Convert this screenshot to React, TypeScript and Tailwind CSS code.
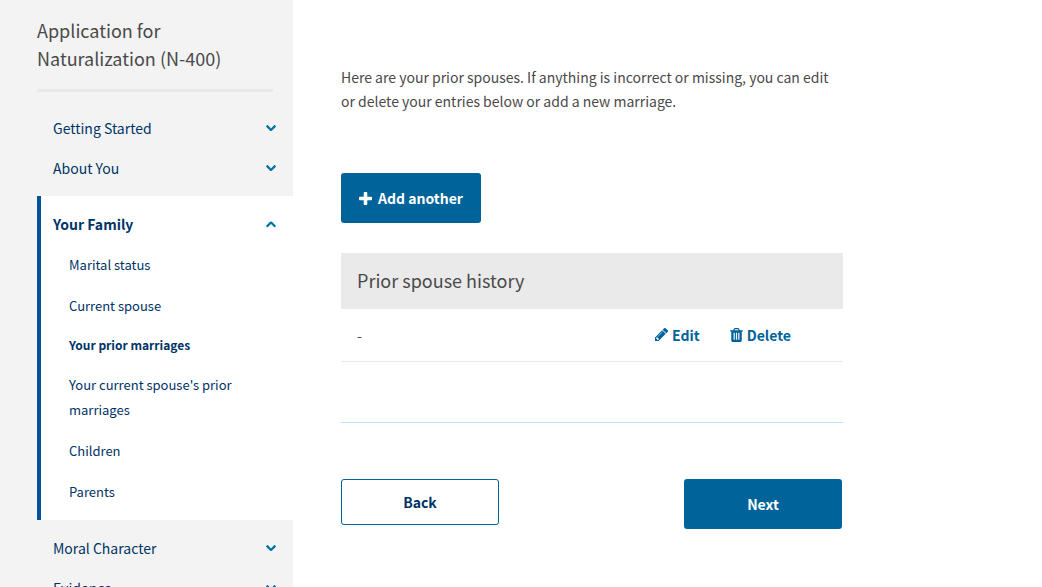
import { useState } from 'react';
import clsx from 'clsx';

interface ISection {
  title: string;
  pages?: string[];
}

const sections: ISection[] = [
  { title: 'Getting Started' },
  { title: 'About You' },
  {
    title: 'Your Family',
    pages: [
      'Marital status',
      'Current spouse',
      'Your prior marriages',
      "Your current spouse's prior marriages",
      'Children',
      'Parents',
    ],
  },
  { title: 'Moral Character' },
  { title: 'Evidence' },
];

const currentPage = 'Your prior marriages';

const ChevronIcon = ({ up }: { up: boolean }) => (
  <svg
    viewBox="90 533 1612 1035"
    fill="currentColor"
    aria-hidden="true"
    className={clsx('w-2.5 text-[#0071a6]', up && 'rotate-180')}
  >
    <path d="M1683 808l-742 741q-19 19-45 19t-45-19l-742-741q-19-19-19-45.500t19-45.500l166-165q19-19 45-19t45 19l531 531 531-531q19-19 45-19t45 19l166 165q19 19 19 45.500t-19 45.500z" />
  </svg>
);

const PlusIcon = () => (
  <svg viewBox="0 128 1408 1408" fill="currentColor" aria-hidden="true" className="size-[13px]">
    <path d="M1408 736v192q0 40-28 68t-68 28H896v416q0 40-28 68t-68 28H608q-40 0-68-28t-28-68v-416H96q-40 0-68-28T0 928V736q0-40 28-68t68-28h416V224q0-40 28-68t68-28h192q40 0 68 28t28 68v416h416q40 0 68 28t28 68z" />
  </svg>
);

const PencilIcon = () => (
  <svg viewBox="0 21 1515 1515" fill="currentColor" aria-hidden="true" className="size-[13px]">
    <path d="M363 1408l91-91-235-235-91 91v107h128v128h107zm523-928q0-22-22-22-10 0-17 7l-542 542q-7 7-7 17 0 22 22 22 10 0 17-7l542-542q7-7 7-17zm-54-192l416 416-832 832H0v-416zm683 96q0 53-37 90l-166 166-416-416 166-165q36-38 90-38 53 0 91 38l235 234q37 39 37 91z" />
  </svg>
);

const TrashIcon = () => (
  <svg viewBox="0 0 1408 1536" fill="currentColor" aria-hidden="true" className="h-3.5 w-[13px]">
    <path d="M512 1248V544q0-14-9-23t-23-9h-64q-14 0-23 9t-9 23v704q0 14 9 23t23 9h64q14 0 23-9t9-23zm256 0V544q0-14-9-23t-23-9h-64q-14 0-23 9t-9 23v704q0 14 9 23t23 9h64q14 0 23-9t9-23zm256 0V544q0-14-9-23t-23-9h-64q-14 0-23 9t-9 23v704q0 14 9 23t23 9h64q14 0 23-9t9-23zM480 256h448l-48-117q-7-9-17-11H546q-10 2-17 11zm928 32v64q0 14-9 23t-23 9h-96v948q0 83-47 143.500t-113 60.500H288q-66 0-113-58.500t-47-141.500V384H32q-14 0-23-9t-9-23v-64q0-14 9-23t23-9h309l70-167q15-37 54-63t79-26h320q40 0 79 26t54 63l70 167h309q14 0 23 9t9 23z" />
  </svg>
);

interface INavSection {
  section: ISection;
  isOpen: boolean;
  onToggle: () => void;
}

const NavSection = ({ section, isOpen, onToggle }: INavSection) => (
  <li className={clsx('border-l-4', isOpen ? 'my-2 border-[#00529b] bg-white py-2' : 'border-transparent')}>
    <button
      type="button"
      onClick={onToggle}
      aria-expanded={isOpen}
      className={clsx(
        'flex h-10 w-full cursor-pointer items-center justify-between pl-3 pr-[17px] text-left',
        isOpen && 'font-bold'
      )}
    >
      {section.title}
      <ChevronIcon up={isOpen} />
    </button>
    {isOpen && section.pages && (
      <ul className="pl-7 pr-12">
        {section.pages.map((page) => (
          <li key={page} className="py-2">
            <a
              href="#"
              className={clsx(
                'block',
                page === currentPage ? 'text-[12px] font-bold leading-[22px]' : 'text-[13px] leading-[25px]'
              )}
            >
              {page}
            </a>
          </li>
        ))}
      </ul>
    )}
  </li>
);

const Sidebar = () => {
  const [openSection, setOpenSection] = useState('Your Family');

  return (
    <aside className="w-[293px] shrink-0 bg-[#f3f3f3] pl-[37px]">
      <h1 className="mr-5 border-b-3 border-[#e9e9e9] pb-[17px] pt-4 text-[18px] leading-7 text-[#4a4a4a]">
        Application for Naturalization (N-400)
      </h1>
      <nav className="mt-4 text-[#003366]">
        <ul>
          {sections.map((section) => (
            <NavSection
              key={section.title}
              section={section}
              isOpen={openSection === section.title}
              onToggle={() => setOpenSection(openSection === section.title ? '' : section.title)}
            />
          ))}
        </ul>
      </nav>
    </aside>
  );
};

export default function App() {
  return (
    <div className="flex min-h-screen bg-white font-['Noto_Sans_CJK_SC',sans-serif] text-[14px] leading-6">
      <Sidebar />
      <main className="min-w-0 flex-1 px-12 pt-[65px]">
        <div className="max-w-[502px]">
          <p className="text-[#4a4a4a]">
            Here are your prior spouses. If anything is incorrect or missing, you can edit or delete your entries
            below or add a new marriage.
          </p>
          <button
            type="button"
            className="mt-15 flex h-[50px] cursor-pointer items-center gap-1.5 rounded-[3px] bg-[#00639a] px-[18px] font-bold text-white"
          >
            <PlusIcon />
            Add another
          </button>
          <table className="mt-[30px] w-full text-left text-[#4a4a4a]">
            <thead>
              <tr className="h-14 bg-[#eaeaea]">
                <th colSpan={2} scope="col" className="px-4 pb-0.5 text-[18px] font-normal">
                  Prior spouse history
                </th>
              </tr>
            </thead>
            <tbody>
              <tr className="h-[52px] border-b border-[#e9e9e9]">
                <td className="px-4">-</td>
                <td className="pr-13">
                  <div className="flex justify-end gap-[30px] font-bold text-[#00639a]">
                    <button type="button" className="flex cursor-pointer items-center gap-1">
                      <PencilIcon />
                      Edit
                    </button>
                    <button type="button" className="flex cursor-pointer items-center gap-1">
                      <TrashIcon />
                      Delete
                    </button>
                  </div>
                </td>
              </tr>
            </tbody>
          </table>
          <div className="mt-15 flex items-start justify-between border-t border-[#bae6fd] pr-px pt-14 font-bold">
            <button
              type="button"
              className="h-[46px] w-[158px] cursor-pointer rounded-[3px] border border-[#00639a] text-[#003366]"
            >
              Back
            </button>
            <button type="button" className="h-[50px] w-[158px] cursor-pointer rounded-[3px] bg-[#00639a] text-white">
              Next
            </button>
          </div>
        </div>
      </main>
    </div>
  );
}
